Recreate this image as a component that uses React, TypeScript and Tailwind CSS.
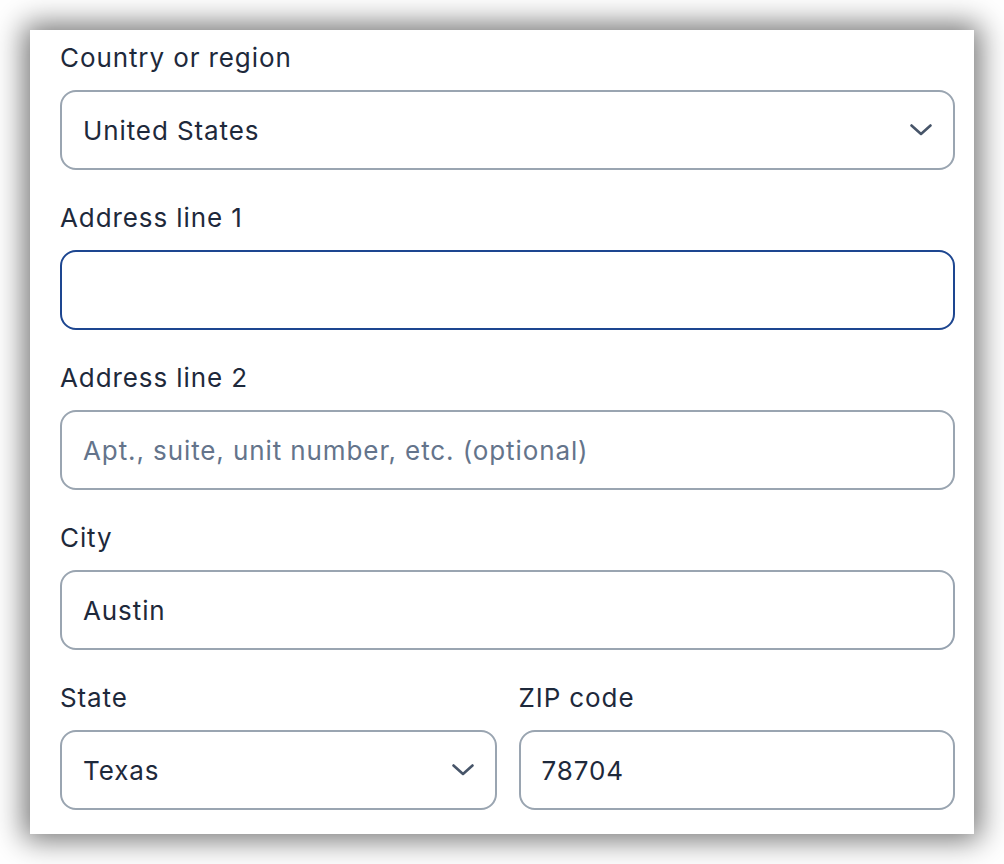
import React from 'react';

const font = { fontFamily: 'Inter, "Noto Sans", sans-serif' };

function Label({ children }: { children: React.ReactNode }) {
  return <div className="h-[40px] leading-[40px] text-[26px] tracking-[0.9px] text-[#1e293b]">{children}</div>;
}

function Chevron() {
  return (
    <svg width="22" height="12" viewBox="0 0 22 12" fill="none" className="shrink-0">
      <polyline points="1.5,1.5 11,10 20.5,1.5" stroke="#475569" strokeWidth="2.6" strokeLinecap="round" strokeLinejoin="round" />
    </svg>
  );
}

function Field({
  value,
  placeholder,
  focused,
  select,
}: {
  value?: string;
  placeholder?: string;
  focused?: boolean;
  select?: boolean;
}) {
  return (
    <div
      className={`mt-[12px] h-[80px] rounded-[16px] border-2 bg-white flex items-center pl-[21px] pr-[21px] text-[26px] tracking-[0.9px] ${
        focused ? 'border-[#1d4690]' : 'border-[#9aa5b1]'
      }`}
    >
      <span className={`flex-1 ${value ? 'text-[#1e293b]' : 'text-[#64748b]'}`}>{value || placeholder}</span>
      {select && <Chevron />}
    </div>
  );
}

export default function App() {
  return (
    <div className="min-h-screen bg-white p-[30px]" style={font}>
      <div className="w-[944px] bg-white shadow-[0_0_28px_6px_rgba(0,0,0,0.55)] pt-[8px] pl-[30px] pr-[19px] pb-[24px]">
        <div>
          <Label>Country or region</Label>
          <Field value="United States" select />
        </div>
        <div className="mt-[28px]">
          <Label>Address line 1</Label>
          <Field focused />
        </div>
        <div className="mt-[28px]">
          <Label>Address line 2</Label>
          <Field placeholder="Apt., suite, unit number, etc. (optional)" />
        </div>
        <div className="mt-[28px]">
          <Label>City</Label>
          <Field value="Austin" />
        </div>
        <div className="mt-[28px] grid grid-cols-2 gap-[22px]">
          <div>
            <Label>State</Label>
            <Field value="Texas" select />
          </div>
          <div>
            <Label>ZIP code</Label>
            <Field value="78704" />
          </div>
        </div>
      </div>
    </div>
  );
}
